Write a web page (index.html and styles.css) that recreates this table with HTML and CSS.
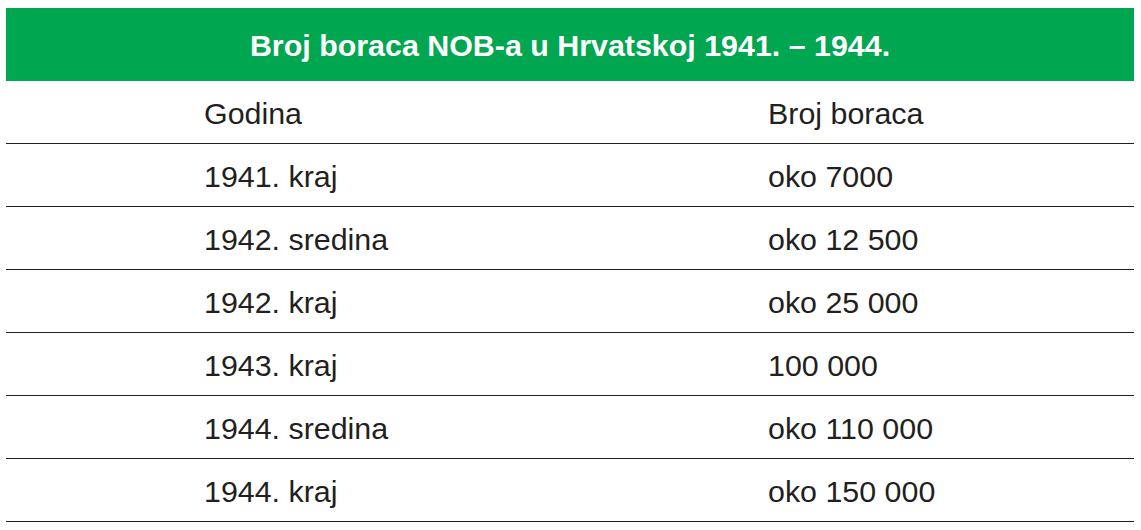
FILE: index.html
```html
<!DOCTYPE html>
<html lang="hr">
<head>
<meta charset="utf-8">
<title>Broj boraca NOB-a u Hrvatskoj 1941. – 1944.</title>
<link rel="stylesheet" href="styles.css">
</head>
<body>
<div class="table">
  <div class="title">Broj boraca NOB-a u Hrvatskoj 1941. – 1944.</div>
  <div class="row"><div class="cell">Godina</div><div class="cell">Broj boraca</div></div>
  <div class="row"><div class="cell">1941. kraj</div><div class="cell">oko 7000</div></div>
  <div class="row"><div class="cell">1942. sredina</div><div class="cell">oko 12 500</div></div>
  <div class="row"><div class="cell">1942. kraj</div><div class="cell">oko 25 000</div></div>
  <div class="row"><div class="cell">1943. kraj</div><div class="cell">100 000</div></div>
  <div class="row"><div class="cell">1944. sredina</div><div class="cell">oko 110 000</div></div>
  <div class="row"><div class="cell">1944. kraj</div><div class="cell">oko 150 000</div></div>
</div>
</body>
</html>
```
FILE: styles.css
```css
html, body {
  margin: 0;
  padding: 0;
  background: #ffffff;
}
body {
  padding: 8px 7px 0 6px;
  font-family: "Liberation Sans", Arial, sans-serif;
  color: #231f20;
}
.table {
  width: 1128px;
  display: flex;
  flex-direction: column;
}
.title {
  height: 73px;
  background: #00a650;
  color: #ffffff;
  font-weight: bold;
  font-size: 30.4px;
  line-height: 34px;
  display: flex;
  align-items: center;
  justify-content: center;
}
.row {
  height: 62px;
  border-bottom: 1px solid #231f20;
  display: grid;
  grid-template-columns: 1fr 1fr;
  align-items: center;
}
.cell {
  padding-left: 198px;
  padding-top: 1px;
  font-size: 30.4px;
  line-height: 34px;
}
```
